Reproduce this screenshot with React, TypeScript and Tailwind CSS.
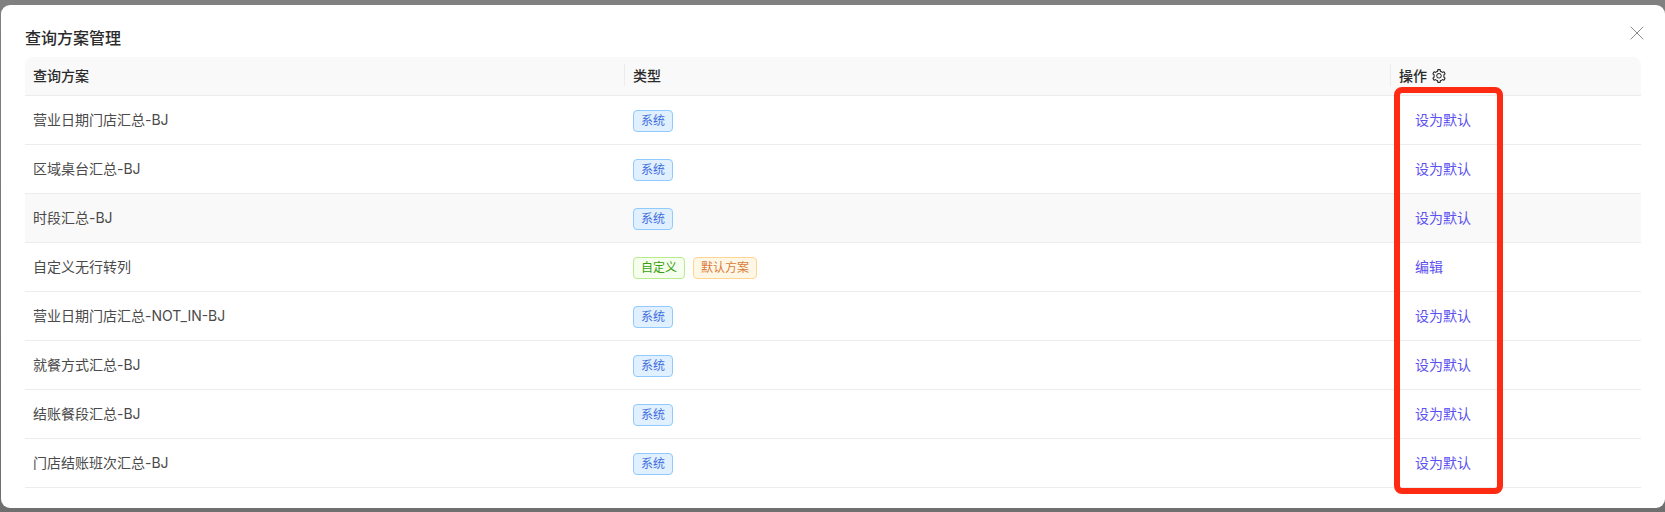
import { X } from 'lucide-react';
import { AiOutlineSetting } from 'react-icons/ai';

type Tag = { label: string; kind: 'system' | 'custom' | 'default' };

type Row = { name: string; tags: Tag[]; action: string };

const system: Tag = { label: '系统', kind: 'system' };

const rows: Row[] = [
  { name: '营业日期门店汇总-BJ', tags: [system], action: '设为默认' },
  { name: '区域桌台汇总-BJ', tags: [system], action: '设为默认' },
  { name: '时段汇总-BJ', tags: [system], action: '设为默认' },
  {
    name: '自定义无行转列',
    tags: [
      { label: '自定义', kind: 'custom' },
      { label: '默认方案', kind: 'default' },
    ],
    action: '编辑',
  },
  { name: '营业日期门店汇总-NOT_IN-BJ', tags: [system], action: '设为默认' },
  { name: '就餐方式汇总-BJ', tags: [system], action: '设为默认' },
  { name: '结账餐段汇总-BJ', tags: [system], action: '设为默认' },
  { name: '门店结账班次汇总-BJ', tags: [system], action: '设为默认' },
];

const tagStyles = {
  system: 'bg-[#e0f0ff] border-[#91caff] text-[#3f6ee0]',
  custom: 'bg-[#f6ffed] border-[#b7eb8f] text-[#389e0d]',
  default: 'bg-[#fff7e6] border-[#ffd591] text-[#d97b3a]',
};

function TagLabel({ tag }: { tag: Tag }) {
  return (
    <span className={`inline-block h-[22px] rounded-[4px] border px-[7px] text-xs leading-[20px] ${tagStyles[tag.kind]}`}>
      {tag.label}
    </span>
  );
}

function HeaderCell({ children, divider }: { children: React.ReactNode; divider?: boolean }) {
  return (
    <th className="relative h-[39px] border-b border-[#ececec] bg-[#f9f9f9] px-2 text-left text-sm font-medium text-[#2b2b2b] first:rounded-tl-lg last:rounded-tr-lg">
      {divider && <span className="absolute top-[7px] left-[-1px] h-[22px] w-px bg-[#ececec]" />}
      {children}
    </th>
  );
}

export default function App() {
  return (
    <div
      className="h-[512px] w-[1665px] overflow-hidden bg-gradient-to-b from-[#808080] to-[#6f6f6f] pt-[5px] pb-1 pl-px"
      style={{ fontFamily: '"Inter", "Noto Sans CJK SC", sans-serif' }}
    >
      <div className="relative h-[503px] rounded-[9px] bg-white px-6 pt-[21px]">
        <h1 className="h-[24px] text-base leading-[24px] font-medium text-[#2b2b2b]">查询方案管理</h1>
        <button className="absolute top-[16px] right-[16px] text-[#8a8a8a]">
          <X size={24} strokeWidth={1} />
        </button>

        <table className="mt-[7px] w-[1616px] table-fixed border-separate border-spacing-0">
          <colgroup>
            <col className="w-[600px]" />
            <col className="w-[766px]" />
            <col />
          </colgroup>
          <thead>
            <tr>
              <HeaderCell>查询方案</HeaderCell>
              <HeaderCell divider>类型</HeaderCell>
              <HeaderCell divider>
                <span className="inline-flex items-center gap-1">
                  操作
                  <AiOutlineSetting className="text-[16px]" />
                </span>
              </HeaderCell>
            </tr>
          </thead>
          <tbody>
            {rows.map((row, i) => (
              <tr key={row.name} className={i === 2 ? 'bg-[#f9f9f9]' : ''}>
                <td className="h-[49px] border-b border-[#ececec] px-2 text-sm text-[#4a4a4a]">{row.name}</td>
                <td className="border-b border-[#ececec] px-2">
                  <div className="mt-px flex gap-2">
                    {row.tags.map((tag) => (
                      <TagLabel key={tag.label} tag={tag} />
                    ))}
                  </div>
                </td>
                <td className="border-b border-[#ececec] px-2 text-sm">
                  <a className="ml-[16px] text-[#5b50f0]">{row.action}</a>
                </td>
              </tr>
            ))}
          </tbody>
        </table>

        {/* red annotation drawn over the screenshot */}
        <div className="absolute top-[82px] left-[1393px] h-[407px] w-[109px] rounded-lg border-[6px] border-[#ff2a12]" />
      </div>
    </div>
  );
}
